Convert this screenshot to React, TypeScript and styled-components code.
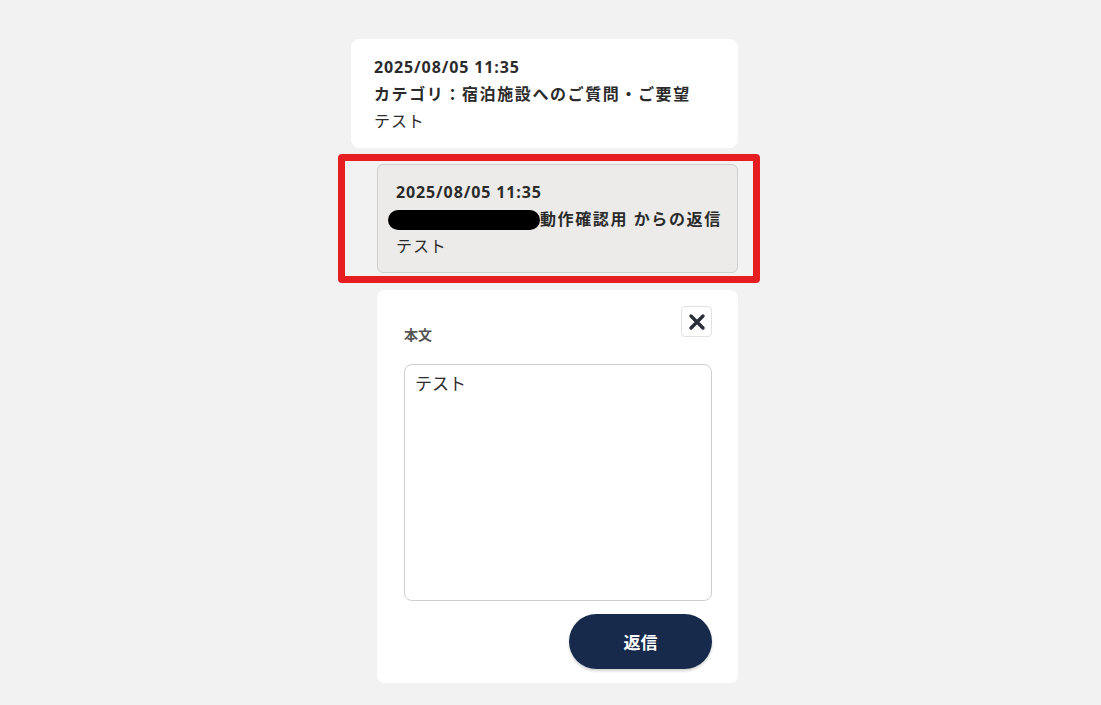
import styled, { createGlobalStyle } from "styled-components";

const GlobalStyle = createGlobalStyle`
  html, body {
    margin: 0;
    padding: 0;
    background: #f2f2f2;
    font-family: "Open Sans", "Noto Sans CJK JP", sans-serif;
    color: #2b2b2b;
  }
`;

const Page = styled.div`
  display: flex;
  justify-content: center;
  padding: 39px 12px 0 0;
  min-height: 705px;
  box-sizing: border-box;
`;

const Thread = styled.div`
  width: 387px;
  display: flex;
  flex-direction: column;
  gap: 16px;
`;

const Message = styled.div<{ reply?: boolean }>`
  box-sizing: border-box;
  margin-left: ${({ reply }) => (reply ? "26px" : "0")};
  padding: ${({ reply }) => (reply ? "14px 8px 12px 18px" : "14px 21px 12px 22px")};
  background: ${({ reply }) => (reply ? "#ecebea" : "#fff")};
  border: 1px solid ${({ reply }) => (reply ? "#cfcfcf" : "#fff")};
  border-radius: ${({ reply }) => (reply ? "6px" : "8px")};
  font-size: 16px;
  line-height: 27px;
  letter-spacing: 0.055em;
  .date,
  .title {
    font-weight: 700;
  }
  .title {
    display: flex;
    align-items: center;
    white-space: nowrap;
    letter-spacing: 1.6px;
  }
`;

const Highlight = styled.div`
  position: relative;
  .mark {
    position: absolute;
    left: -13px;
    right: -22px;
    top: -10px;
    bottom: -10px;
    border: 7px solid #e61e22;
    border-radius: 4px;
    pointer-events: none;
  }
`;

const Redacted = styled.span`
  display: inline-block;
  flex-shrink: 0;
  width: 152px;
  height: 20px;
  margin-left: -8px;
  background: #000;
  border-radius: 10px;
`;

const Form = styled.div`
  margin: 1px 0 22px 26px;
  background: #fff;
  border-radius: 8px;
  padding: 16px 26px 14px 27px;
  display: flex;
  flex-direction: column;
  .head {
    display: flex;
    justify-content: space-between;
    align-items: flex-start;
  }
  .label {
    margin-top: 18px;
    font-size: 14px;
    font-weight: 700;
    color: #555;
  }
`;

const CloseButton = styled.button`
  width: 31px;
  height: 31px;
  padding: 0;
  border: 1px solid #e2e2e2;
  border-radius: 4px;
  background: #fff;
  display: flex;
  align-items: center;
  justify-content: center;
`;

const TextArea = styled.textarea`
  margin-top: 20px;
  width: 100%;
  height: 237px;
  box-sizing: border-box;
  border: 1px solid #cfcfcf;
  border-radius: 8px;
  padding: 5px 10px;
  font-family: "Open Sans", "Noto Sans CJK JP", sans-serif;
  font-size: 17px;
  color: #2b2b2b;
  resize: none;
  outline: none;
`;

const SubmitButton = styled.button`
  align-self: flex-end;
  margin-top: 13px;
  width: 143px;
  height: 55px;
  border: none;
  border-radius: 28px;
  background: #172a4b;
  color: #fff;
  font-family: "Noto Sans CJK JP", sans-serif;
  font-size: 17px;
  font-weight: 700;
  box-shadow: 0 2px 3px rgba(0, 0, 0, 0.18);
`;

const App = () => (
  <>
    <GlobalStyle />
    <Page>
      <Thread>
        <Message>
          <div className="date">2025/08/05 11:35</div>
          <div className="title">カテゴリ：宿泊施設へのご質問・ご要望</div>
          <div>テスト</div>
        </Message>
        <Highlight>
          <Message reply>
            <div className="date">2025/08/05 11:35</div>
            <div className="title">
              <Redacted />
              動作確認用 からの返信
            </div>
            <div>テスト</div>
          </Message>
          <div className="mark" />
        </Highlight>
        <Form>
          <div className="head">
            <div className="label">本文</div>
            <CloseButton aria-label="閉じる">
              <svg width="18" height="18" viewBox="0 0 18 18">
                <path
                  d="M3 3 L15 15 M15 3 L3 15"
                  stroke="#2b2f3a"
                  strokeWidth="3.4"
                  strokeLinecap="round"
                />
              </svg>
            </CloseButton>
          </div>
          <TextArea defaultValue="テスト" />
          <SubmitButton>返信</SubmitButton>
        </Form>
      </Thread>
    </Page>
  </>
);

export default App;
